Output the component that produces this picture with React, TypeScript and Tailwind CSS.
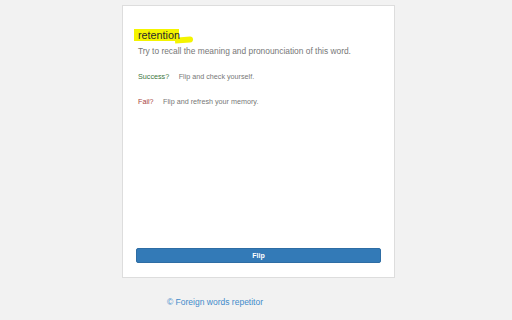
import React from "react";

export default function App() {
  return (
    <div
      className="w-[512px] h-[320px] bg-[#f2f2f2] overflow-hidden"
      style={{ fontFamily: '"Liberation Sans", Arial, sans-serif' }}
    >
      <div className="ml-[122px] mt-[5px] w-[273px] h-[273px] bg-white border border-[#dddddd] flex flex-col px-[13px]">
        <div className="pl-[2px] mt-[23px] h-[13px] flex items-center text-[10.8px] leading-[13px]">
          <div className="relative flex h-[13px]">
            <span className="absolute left-[-4px] top-0 w-[45px] h-[12px] bg-[#f4f400]" />
            <span className="absolute left-[37px] top-[8px] w-[18px] h-[6px] bg-[#f4f400] rounded-r-[3px] -rotate-[4deg]" />
            <span className="relative text-[#2a2a2a]">retention</span>
          </div>
        </div>
        <div className="pl-[2px] mt-[4px] text-[8.4px] leading-[10px] text-[#777777]">
          Try to recall the meaning and pronounciation of this word.
        </div>
        <div className="pl-[2px] mt-[16px] flex gap-[9.5px] text-[7.2px] leading-[10px]">
          <span className="text-[#3c763d]">Success?</span>
          <span className="text-[#777777]">Flip and check yourself.</span>
        </div>
        <div className="pl-[2px] mt-[15px] flex gap-[9.5px] text-[7.2px] leading-[10px]">
          <span className="text-[#a94442]">Fail?</span>
          <span className="text-[#777777]">Flip and refresh your memory.</span>
        </div>
        <div className="flex-1" />
        <button className="mb-[14px] h-[15px] w-full bg-[#337ab7] border border-[#2e6da4] rounded-[2px] text-white text-[7px] font-bold leading-none flex items-center justify-center">
          Flip
        </button>
      </div>
      <div className="ml-[167px] mt-[19px] text-[8.5px] leading-[10px] text-[#428bca]">
        © Foreign words repetitor
      </div>
    </div>
  );
}
